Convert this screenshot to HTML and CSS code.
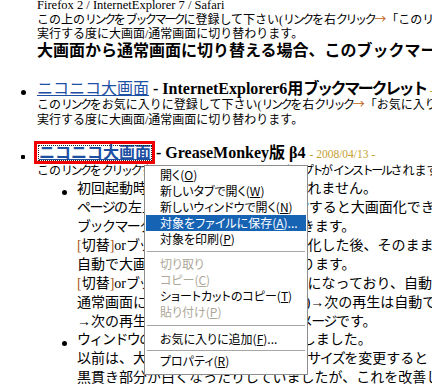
FILE: index.html
```
<!DOCTYPE html>
<html lang="ja">
<head>
<meta charset="utf-8">
<title>ニコニコ大画面</title>
<link rel="stylesheet" href="styles.css">
</head>
<body>
<div class="page">
  <p class="l1">Firefox 2 / InternetExplorer 7 / Safari</p>
  <p class="sm">この上の<span class="k">リンク</span>を<span class="k">ブックマーク</span>に登録して下さい(<span class="k">リンク</span>を右<span class="k">クリック</span><span class="ar">→</span>「この<span class="k">リンク</span>を<span class="k">ブックマーク</span>」)。</p>
  <p class="sm">実行する度に大画面/通常画面に切り替わります。</p>
  <p class="hd">大画面から通常画面に切り替える場合、このブックマークレットを再度実行して下さい。</p>

  <ul class="main">
    <li class="item item1">
      <span class="dot round"></span>
      <div class="body">
        <div class="title"><a class="lnk" href="#">ニコニコ大画面</a> <b>- InternetExplorer6用<span class="k">ブックマークレット</span></b> <span class="date">- 2007/10/28 -</span></div>
        <p class="sm">この<span class="k">リンク</span>をお気に入りに登録して下さい(<span class="k">リンク</span>を右<span class="k">クリック</span><span class="ar">→</span>「お気に入りに追加」)。</p>
        <p class="sm">実行する度に大画面/通常画面に切り替わります。</p>
      </div>
    </li>
    <li class="item item2">
      <span class="dot square"></span>
      <div class="body">
        <div class="title"><span class="mark"><a class="lnk strong focus" href="#">ニコニコ大画面</a></span> <b>- GreaseMonkey版 β4</b> <span class="date">- 2008/04/13 -</span></div>
        <p class="sm">この<span class="k">リンク</span>を<span class="k">クリック</span>すると、GreaseMonkeyの<span class="k">スクリプト</span>が<span class="k">インストール</span>されます。</p>
        <ul class="sub">
          <li class="subitem">
            <span class="dot round sdot"></span>
            <div class="lines">
              <p>初回起動時は、<span class="k">スクリプト</span>が読み込まれません。</p>
              <p><span class="k">ページ</span>の左上の<span class="br">[</span>切替<span class="br">]</span><span class="k">ボタン</span>を<span class="k">クリック</span>すると大画面化できます。</p>
              <p><span class="k">ブックマークレット</span>でも、大画面化できます。</p>
              <p><span class="br">[</span>切替<span class="br">]</span>or<span class="k">ブックマークレット</span>で、大画面化した後、そのまま次の動画へ移動すると</p>
              <p>自動で大画面化した状態のままになります。</p>
              <p><span class="br">[</span>切替<span class="br">]</span>or<span class="k">ブックマークレット</span>で、大画面になっており、自動で大画面化</p>
              <p>通常画面に戻すと(次回から通常画面)→次の再生は自動で通常画面</p>
              <p>→次の再生は通常画面で、という<span class="k">イメージ</span>です。</p>
            </div>
          </li>
          <li class="subitem">
            <span class="dot round sdot"></span>
            <div class="lines">
              <p><span class="k">ウィンドウ</span>の<span class="k">サイズ</span>変更時にも、対応しました。</p>
              <p>以前は、大画面化状態で<span class="k">ウィンドウ</span>の<span class="k">サイズ</span>を変更すると</p>
              <p>黒貫き部分が白くなったりしていましたが、これを改善しました。</p>
            </div>
          </li>
        </ul>
      </div>
    </li>
  </ul>

  <div class="menu">
    <div class="mi">開く(<u>O</u>)</div>
    <div class="mi">新しいタブで開く(<u>W</u>)</div>
    <div class="mi">新しいウィンドウで開く(<u>N</u>)</div>
    <div class="mi sel">対象をファイルに保存(<u>A</u>)...</div>
    <div class="mi">対象を印刷(<u>P</u>)</div>
    <div class="sep s1"></div>
    <div class="mi dis">切り取り</div>
    <div class="mi dis">コピー(<u>C</u>)</div>
    <div class="mi">ショートカットのコピー(<u>T</u>)</div>
    <div class="mi dis">貼り付け(<u>P</u>)</div>
    <div class="sep s2"></div>
    <div class="mi">お気に入りに追加(<u>F</u>)...</div>
    <div class="sep s3"></div>
    <div class="mi">プロパティ(<u>R</u>)</div>
  </div>
</div>
</body>
</html>
```

FILE: styles.css
```
html, body {
  margin: 0;
  padding: 0;
  overflow: hidden;
  background: #ffffff;
}

body {
  width: 432px;
  height: 384px;
  font-family: "Liberation Serif", "Noto Sans CJK JP", serif;
  color: #000;
}

.page {
  position: relative;
  width: 432px;
  height: 384px;
  overflow: hidden;
}

p { margin: 0; }

.page > p {
  margin-left: 37px;
  white-space: nowrap;
}

.l1 {
  font-size: 12.5px;
  line-height: 11px;
  margin-bottom: 2px;
}

.sm {
  font-size: 12px;
  line-height: 14px;
  white-space: nowrap;
}

.k { letter-spacing: -0.2em; }
.ar {
  color: #c0600c;
  font-family: "Noto Sans CJK JP", sans-serif;
  line-height: 0;
}

.hd {
  font-family: "Noto Sans CJK JP", sans-serif;
  font-weight: 700;
  font-size: 16px;
  line-height: 16px;
}

ul { list-style: none; margin: 0; padding: 0; }

.main {
  margin-top: 22px;
  padding-left: 21px;
}

.item {
  display: flex;
  align-items: flex-start;
}

.item2 { margin-top: 14.5px; }

.dot {
  flex: none;
  width: 5px;
  height: 5px;
  background: #000;
  margin: 11px 11px 0 0;
}
.round { border-radius: 50%; }
.square { width: 4px; height: 4px; margin-top: 12px; margin-right: 12px; border-radius: 1px; }

.body { flex: 1; min-width: 0; }

.title {
  font-size: 16px;
  line-height: 19px;
  white-space: nowrap;
}
.title b { font-weight: 700; }
.title .k { letter-spacing: -0.15em; }

.body .sm { line-height: 15px; }
.item2 .body > .sm { margin-top: 2px; }

.lnk {
  color: #1d4fa3;
  text-decoration: underline;
}
.strong { font-weight: 700; }

.mark {
  display: inline-block;
  padding: 2px 1px 1px 2px;
  line-height: 14px;
  outline: 3px solid #f00000;
}
.focus {
  display: inline-block;
  line-height: 14px;
  outline: 1px dotted #222;
}

.date {
  font-size: 11.5px;
  line-height: 12px;
  color: #c5a033;
}

.sub {
  margin-top: 1.7px;
  padding-left: 25px;
}
.subitem {
  display: flex;
  align-items: flex-start;
}
.sdot { margin: 9.5px 10px 0 0; }
.lines p {
  font-size: 14px;
  line-height: 18.9px;
  white-space: nowrap;
}
.lines .k { letter-spacing: -0.11em; }
.br { color: #a85a18; }

.menu {
  position: absolute;
  left: 144px;
  top: 165px;
  width: 160px;
  height: 205px;
  border: 1px solid #8d8d8d;
  background: #ffffff;
  padding: 1px 1px 2px 1px;
  box-sizing: content-box;
  font-family: "Noto Sans CJK JP", sans-serif;
  font-size: 12px;
  display: flex;
  flex-direction: column;
}
.menu .mi {
  height: 16px;
  line-height: 16px;
  padding-left: 14px;
  white-space: nowrap;
  color: #000;
  font-feature-settings: "palt";
}
.menu .mi.sel {
  background: #1663b4;
  color: #ffffff;
}
.menu .mi.dis { color: #aca899; }
.menu u { text-underline-offset: 1px; }

.sep {
  flex: none;
  margin: 0 1px;
  display: flex;
  align-items: center;
}
.sep::after {
  content: "";
  display: block;
  width: 100%;
  height: 1px;
  background: #a6a6a6;
}
.s1 { height: 9px; }
.s2 { height: 11px; }
.s3 { height: 6px; }
```
